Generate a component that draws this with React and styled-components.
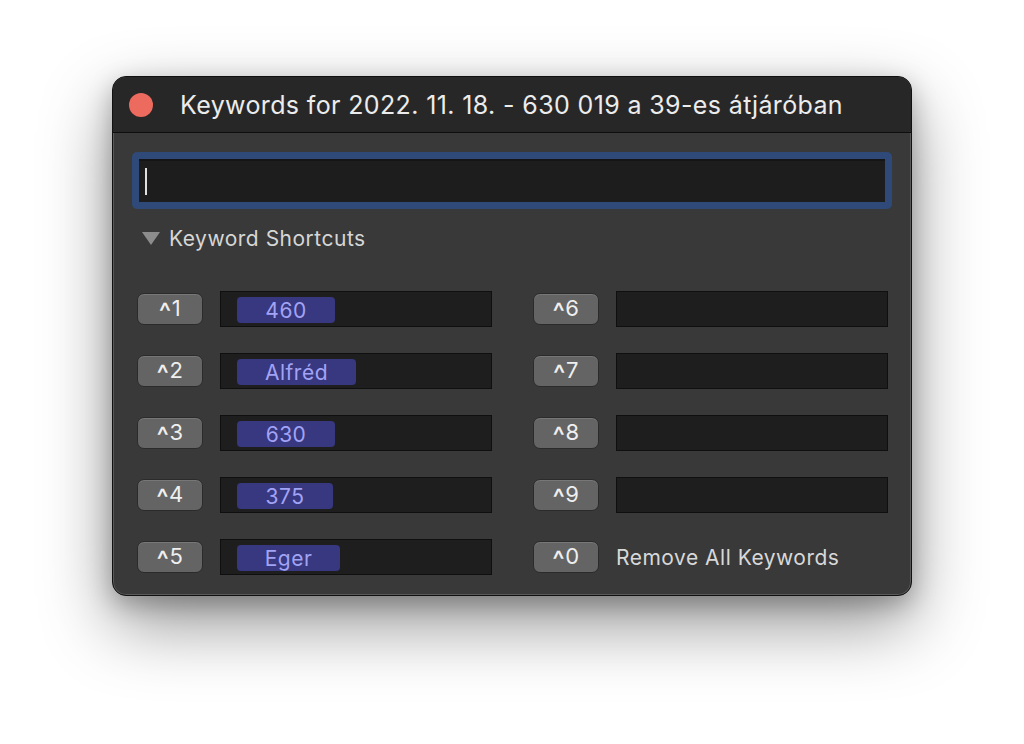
import React from 'react';
import styled, { createGlobalStyle } from 'styled-components';

const Global = createGlobalStyle`
  html, body {
    margin: 0;
    background: #ffffff;
  }
  body {
    font-family: Inter, "Noto Sans", "Liberation Sans", sans-serif;
  }
`;

const Page = styled.div`
  width: 1024px;
  height: 744px;
  padding: 76px 0 0 112px;
  box-sizing: border-box;
  overflow: hidden;
`;

const Window = styled.div`
  width: 800px;
  height: 520px;
  box-sizing: border-box;
  border-radius: 14px;
  background: #393939;
  border: 1px solid #111;
  box-shadow: 0 28px 70px rgba(0, 0, 0, 0.42), 0 8px 24px rgba(0, 0, 0, 0.25),
    inset 0 0 0 1px #5a5a5a;
  overflow: hidden;
  display: flex;
  flex-direction: column;
`;

const TitleBar = styled.div`
  height: 56px;
  flex: none;
  box-sizing: border-box;
  background: #272727;
  border-bottom: 1px solid #0e0e0e;
  display: flex;
  align-items: center;
  padding-left: 16px;
  gap: 27px;
`;

const CloseDot = styled.span`
  width: 24px;
  height: 24px;
  border-radius: 50%;
  background: #ec6a5e;
  flex: none;
`;

const Title = styled.h1`
  margin: 0;
  font-size: 25px;
  font-weight: 400;
  color: #ececec;
  letter-spacing: 0.37px;
`;

const Body = styled.div`
  padding: 19px 19px 0 19px;
  display: flex;
  flex-direction: column;
`;

const SearchRing = styled.div`
  height: 57px;
  box-sizing: border-box;
  border-radius: 5px;
  background: #2f4a78;
  padding: 7px;
`;

const SearchField = styled.div`
  height: 100%;
  background: #1d1d1d;
  border-top: 2px solid #151515;
  box-sizing: border-box;
  display: flex;
  align-items: center;
  padding-left: 6px;
`;

const Caret = styled.span`
  width: 2px;
  height: 27px;
  background: #e0e0e0;
`;

const Disclosure = styled.div`
  display: flex;
  align-items: center;
  gap: 9px;
  margin-top: 17px;
  padding-left: 10px;
  height: 24px;
  color: #d6d6d6;
  font-size: 21px;
  letter-spacing: 0.5px;
`;

const Triangle = styled.span`
  width: 0;
  height: 0;
  border-left: 9px solid transparent;
  border-right: 9px solid transparent;
  border-top: 13px solid #8c8c8c;
`;

const Grid = styled.div`
  display: grid;
  grid-template-columns: 355px 355px;
  column-gap: 41px;
  row-gap: 26px;
  padding: 0 6px 0 5px;
  margin-top: 41px;
`;

const Row = styled.div`
  display: flex;
  align-items: center;
  gap: 17px;
  height: 36px;
`;

const KeyButton = styled.div`
  width: 66px;
  height: 32px;
  box-sizing: border-box;
  flex: none;
  border-radius: 7px;
  background: #646464;
  border: 1px solid #2b2b2b;
  box-shadow: inset 0 1px 0 #777;
  color: #efefef;
  font-size: 22px;
  letter-spacing: 0.5px;
  display: flex;
  align-items: center;
  justify-content: center;
  padding-bottom: 2px;
`;

const Hat = styled.span`
  font-size: 26px;
  font-weight: 500;
  margin-top: 6px;
`;

const Field = styled.div`
  width: 272px;
  height: 36px;
  box-sizing: border-box;
  background: #1e1e1e;
  border: 1px solid #0f0f0f;
  display: flex;
  align-items: center;
  padding-left: 16px;
`;

const Token = styled.span`
  height: 26px;
  min-width: ${(p) => p.$min}px;
  box-sizing: border-box;
  padding: 0 24px;
  border-radius: 4px;
  background: #37387f;
  color: #a2a3f5;
  font-size: 21px;
  letter-spacing: 0.5px;
  display: flex;
  align-items: center;
  justify-content: center;
  margin-top: 2px;
`;

const Label = styled.span`
  color: #d8d8d8;
  font-size: 21px;
  letter-spacing: 0.5px;
`;

const left = [
  { key: '1', word: '460', min: 98 },
  { key: '2', word: 'Alfréd', min: 119 },
  { key: '3', word: '630', min: 98 },
  { key: '4', word: '375', min: 96 },
  { key: '5', word: 'Eger', min: 103 },
];

const right = ['6', '7', '8', '9'];

function Shortcut({ n }) {
  return (
    <KeyButton>
      <Hat>^</Hat>
      {n}
    </KeyButton>
  );
}

function App() {
  const rows = [];
  left.forEach((l, i) => {
    rows.push(
      <Row key={'l' + l.key}>
        <Shortcut n={l.key} />
        <Field>
          <Token $min={l.min}>{l.word}</Token>
        </Field>
      </Row>
    );
    if (i < 4) {
      rows.push(
        <Row key={'r' + right[i]}>
          <Shortcut n={right[i]} />
          <Field />
        </Row>
      );
    } else {
      rows.push(
        <Row key="r0">
          <Shortcut n="0" />
          <Label>Remove All Keywords</Label>
        </Row>
      );
    }
  });

  return (
    <Page>
      <Global />
      <Window>
        <TitleBar>
          <CloseDot />
          <Title>Keywords for 2022. 11. 18. - 630 019 a 39-es átjáróban</Title>
        </TitleBar>
        <Body>
          <SearchRing>
            <SearchField>
              <Caret />
            </SearchField>
          </SearchRing>
          <Disclosure>
            <Triangle />
            Keyword Shortcuts
          </Disclosure>
          <Grid>{rows}</Grid>
        </Body>
      </Window>
    </Page>
  );
}

export default App;
